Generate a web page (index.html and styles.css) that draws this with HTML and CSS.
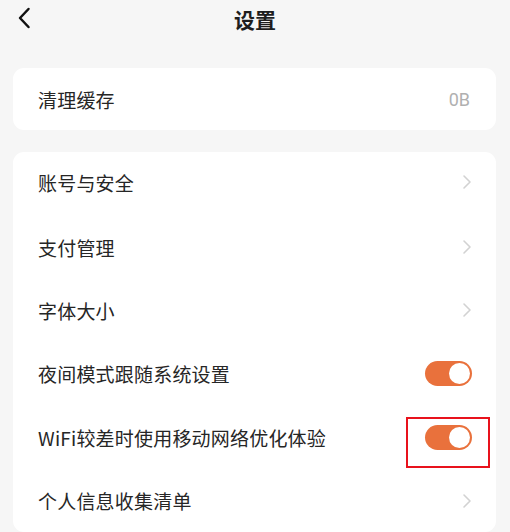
FILE: index.html
```html
<!DOCTYPE html>
<html lang="zh-CN">
<head>
<meta charset="utf-8">
<link rel="stylesheet" href="styles.css">
</head>
<body>
<div class="page">
  <header class="nav">
    <span class="back">
      <svg width="14" height="22" viewBox="0 0 14 22"><path d="M11.5 2 L3 11 L11.5 20" fill="none" stroke="#111" stroke-width="2.5" stroke-linecap="round" stroke-linejoin="round"/></svg>
    </span>
    <h1 class="title">设置</h1>
  </header>
  <main class="content">
    <section class="card">
      <div class="row">
        <span class="label">清理缓存</span>
        <span class="value">0B</span>
      </div>
    </section>
    <section class="card card-list">
      <div class="row">
        <span class="label">账号与安全</span>
        <span class="chev"><svg width="10" height="16" viewBox="0 0 10 16"><path d="M2 2 L8 8 L2 14" fill="none" stroke="#d2d2d2" stroke-width="1.6" stroke-linecap="round" stroke-linejoin="round"/></svg></span>
      </div>
      <div class="row">
        <span class="label">支付管理</span>
        <span class="chev"><svg width="10" height="16" viewBox="0 0 10 16"><path d="M2 2 L8 8 L2 14" fill="none" stroke="#d2d2d2" stroke-width="1.6" stroke-linecap="round" stroke-linejoin="round"/></svg></span>
      </div>
      <div class="row">
        <span class="label">字体大小</span>
        <span class="chev"><svg width="10" height="16" viewBox="0 0 10 16"><path d="M2 2 L8 8 L2 14" fill="none" stroke="#d2d2d2" stroke-width="1.6" stroke-linecap="round" stroke-linejoin="round"/></svg></span>
      </div>
      <div class="row">
        <span class="label">夜间模式跟随系统设置</span>
        <span class="toggle"><span class="knob"></span></span>
      </div>
      <div class="row">
        <span class="label">WiFi较差时使用移动网络优化体验</span>
        <span class="toggle highlighted"><span class="knob"></span></span>
      </div>
      <div class="row">
        <span class="label">个人信息收集清单</span>
        <span class="chev"><svg width="10" height="16" viewBox="0 0 10 16"><path d="M2 2 L8 8 L2 14" fill="none" stroke="#d2d2d2" stroke-width="1.6" stroke-linecap="round" stroke-linejoin="round"/></svg></span>
      </div>
    </section>
  </main>
</div>
</body>
</html>
```

FILE: styles.css
```css
*, *::before, *::after { box-sizing: border-box; }
html, body {
  margin: 0;
  padding: 0;
  background: #f6f6f6;
  font-family: "Noto Sans CJK SC", "Noto Sans", sans-serif;
  color: #222;
}
.page {
  width: 510px;
  height: 532px;
  overflow: hidden;
}
.nav {
  position: relative;
  height: 40px;
  display: flex;
  align-items: center;
  justify-content: center;
}
.back {
  position: absolute;
  left: 17px;
  top: 7px;
  display: flex;
}
.title {
  margin: 0;
  font-size: 21px;
  font-weight: 600;
  line-height: 40px;
  color: #1e1e1e;
  transform: translateY(-1px);
}
.content {
  padding: 28px 14px 0 13px;
  display: flex;
  flex-direction: column;
  gap: 22px;
}
.card {
  background: #fff;
  border-radius: 11px;
}
.row {
  height: 62px;
  display: flex;
  align-items: center;
  justify-content: space-between;
  padding: 0 26px 0 25px;
}
.card-list .row {
  height: 63.4px;
}
.card-list .row:first-child {
  padding-bottom: 3px;
}
.label {
  font-size: 19px;
  color: #262626;
  letter-spacing: 0.2px;
}
.value {
  font-size: 18px;
  color: #b0b0b0;
  font-family: "Roboto", "Noto Sans", sans-serif;
}
.chev {
  display: flex;
  margin-right: -2px;
}
.toggle {
  position: relative;
  width: 47px;
  height: 25px;
  border-radius: 13px;
  background: #e9713c;
  display: flex;
  align-items: center;
  justify-content: flex-end;
  padding-right: 2px;
  margin-right: -2px;
}
.knob {
  width: 21px;
  height: 21px;
  border-radius: 50%;
  background: #fff;
}
.highlighted::after {
  content: "";
  position: absolute;
  left: -19px;
  top: -8px;
  width: 84px;
  height: 51px;
  border: 2px solid #e8121c;
}
```
